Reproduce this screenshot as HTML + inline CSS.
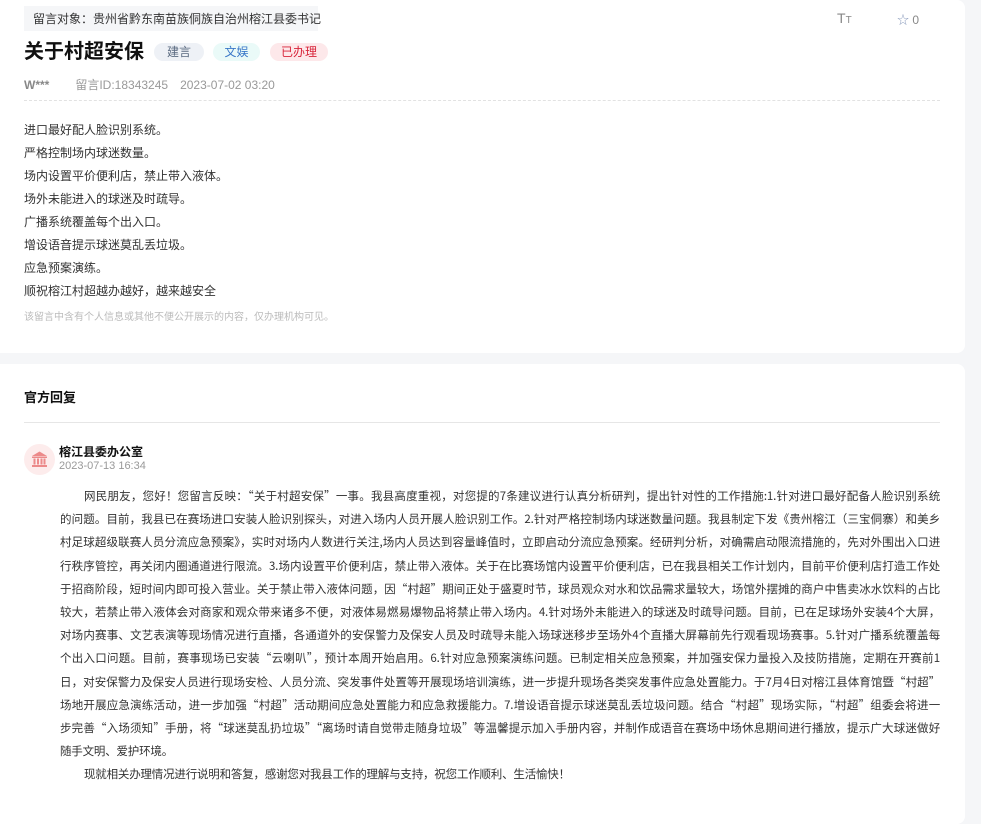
<!DOCTYPE html>
<html><head><meta charset="utf-8"><style>
*{margin:0;padding:0;box-sizing:border-box}
body{width:981px;height:807px;background:#f5f6f8;font-family:"Liberation Sans","Noto Sans CJK SC",sans-serif;position:relative;overflow:hidden;color:#333}
.card{position:absolute;left:0;width:965px;background:#fff;border-radius:0 8px 8px 0}
.a{position:absolute;white-space:nowrap}
.tag{position:absolute;top:43px;height:18px;border-radius:9px;font-size:12px;line-height:18px;text-align:center}
.body div{position:absolute;left:24px;font-size:12px;line-height:16px;white-space:nowrap;color:#333}
.rp{position:absolute;left:60px;width:880px;font-size:11.5px;letter-spacing:-0.2px;color:#333;font-family:"Noto Sans CJK SC",sans-serif}
.rp div{height:23.2px;line-height:23.2px;text-align:justify;text-align-last:justify;white-space:nowrap;overflow:hidden}
.rp div.l{text-align-last:left}
.rp div.i{padding-left:24px}
</style></head><body>
<div class="card" style="top:0;height:353px">
 <div class="a" style="left:24px;top:6px;width:294px;height:25px;background:#f5f6f8;font-size:12px;line-height:25px;padding-left:9px;color:#333;font-family:'Noto Sans CJK SC',sans-serif">留言对象：贵州省黔东南苗族侗族自治州榕江县委书记</div>
 <div class="a" style="left:24px;top:38px;font-size:20px;font-weight:bold;line-height:28px;color:#111">关于村超安保</div>
 <div class="tag" style="left:154px;width:50px;background:#eef1f6;color:#5a6a80">建言</div>
 <div class="tag" style="left:213px;width:47px;background:#eafaf8;color:#3a78c8">文娱</div>
 <div class="tag" style="left:270px;width:58px;background:#fde8ea;color:#d8243a">已办理</div>
 <div class="a" style="left:24px;top:77px;font-size:12px;line-height:16px;color:#999"><b style="color:#888">W***</b><span style="margin-left:26px">留言ID:18343245</span><span style="margin-left:12px">2023-07-02 03:20</span></div>
 <div class="a" style="left:24px;top:100px;width:916px;border-top:1px dashed #e2e2e2"></div>
 <div class="a" style="left:837px;top:10px;font-size:14px;color:#888">T<span style="font-size:10px">T</span></div>
 <div class="a" style="left:897px;top:11px;font-size:12px;color:#888"><span style="color:#8899bb">☆</span> 0</div>
 <div class="body">
  <div style="top:122px">进口最好配人脸识别系统。</div>
  <div style="top:145px">严格控制场内球迷数量。</div>
  <div style="top:168px">场内设置平价便利店，禁止带入液体。</div>
  <div style="top:191px">场外未能进入的球迷及时疏导。</div>
  <div style="top:214px">广播系统覆盖每个出入口。</div>
  <div style="top:237px">增设语音提示球迷莫乱丢垃圾。</div>
  <div style="top:260px">应急预案演练。</div>
  <div style="top:283px">顺祝榕江村超越办越好，越来越安全</div>
  <div style="top:310px;font-size:10px;color:#bbb">该留言中含有个人信息或其他不便公开展示的内容，仅办理机构可见。</div>
 </div>
</div>
<div class="card" style="top:364px;height:460px">
 <div class="a" style="left:24px;top:23px;font-size:13px;font-weight:bold;color:#111">官方回复</div>
 <div class="a" style="left:24px;top:58px;width:916px;border-top:1px solid #e6e6e6"></div>
 <div class="a" style="left:24px;top:80px;width:31px;height:31px;border-radius:50%;background:#fdecec">
  <svg width="31" height="31" viewBox="0 0 31 31"><g fill="#ec8a8a"><path d="M8 12 L15.5 7.5 L23 12 Z"/><rect x="8" y="12.5" width="15" height="1.5"/><rect x="9.5" y="14.5" width="2" height="6"/><rect x="13" y="14.5" width="2" height="6"/><rect x="16.5" y="14.5" width="2" height="6"/><rect x="19.5" y="14.5" width="2" height="6"/><rect x="8" y="21" width="15" height="2"/></g></svg>
 </div>
 <div class="a" style="left:59px;top:79px;font-size:12px;font-weight:bold;color:#111">榕江县委办公室</div>
 <div class="a" style="left:59px;top:96px;font-size:11px;color:#999">2023-07-13 16:34</div>
 <div class="rp" style="top:121px">
  <div class="i">网民朋友，您好！您留言反映：“关于村超安保”一事。我县高度重视，对您提的7条建议进行认真分析研判，提出针对性的工作措施:1.针对进口最好配备人脸识别系统</div>
  <div>的问题。目前，我县已在赛场进口安装人脸识别探头，对进入场内人员开展人脸识别工作。2.针对严格控制场内球迷数量问题。我县制定下发《贵州榕江（三宝侗寨）和美乡</div>
  <div>村足球超级联赛人员分流应急预案》，实时对场内人数进行关注,场内人员达到容量峰值时，立即启动分流应急预案。经研判分析，对确需启动限流措施的，先对外围出入口进</div>
  <div>行秩序管控，再关闭内圈通道进行限流。3.场内设置平价便利店，禁止带入液体。关于在比赛场馆内设置平价便利店，已在我县相关工作计划内，目前平价便利店打造工作处</div>
  <div>于招商阶段，短时间内即可投入营业。关于禁止带入液体问题，因“村超”期间正处于盛夏时节，球员观众对水和饮品需求量较大，场馆外摆摊的商户中售卖冰水饮料的占比</div>
  <div>较大，若禁止带入液体会对商家和观众带来诸多不便，对液体易燃易爆物品将禁止带入场内。4.针对场外未能进入的球迷及时疏导问题。目前，已在足球场外安装4个大屏，</div>
  <div>对场内赛事、文艺表演等现场情况进行直播，各通道外的安保警力及保安人员及时疏导未能入场球迷移步至场外4个直播大屏幕前先行观看现场赛事。5.针对广播系统覆盖每</div>
  <div>个出入口问题。目前，赛事现场已安装“云喇叭”，预计本周开始启用。6.针对应急预案演练问题。已制定相关应急预案，并加强安保力量投入及技防措施，定期在开赛前1</div>
  <div>日，对安保警力及保安人员进行现场安检、人员分流、突发事件处置等开展现场培训演练，进一步提升现场各类突发事件应急处置能力。于7月4日对榕江县体育馆暨“村超”</div>
  <div>场地开展应急演练活动，进一步加强“村超”活动期间应急处置能力和应急救援能力。7.增设语音提示球迷莫乱丢垃圾问题。结合“村超”现场实际，“村超”组委会将进一</div>
  <div>步完善“入场须知”手册，将“球迷莫乱扔垃圾”“离场时请自觉带走随身垃圾”等温馨提示加入手册内容，并制作成语音在赛场中场休息期间进行播放，提示广大球迷做好</div>
  <div class="l">随手文明、爱护环境。</div>
  <div class="l i">现就相关办理情况进行说明和答复，感谢您对我县工作的理解与支持，祝您工作顺利、生活愉快！</div>
 </div>
</div>
</body></html>
